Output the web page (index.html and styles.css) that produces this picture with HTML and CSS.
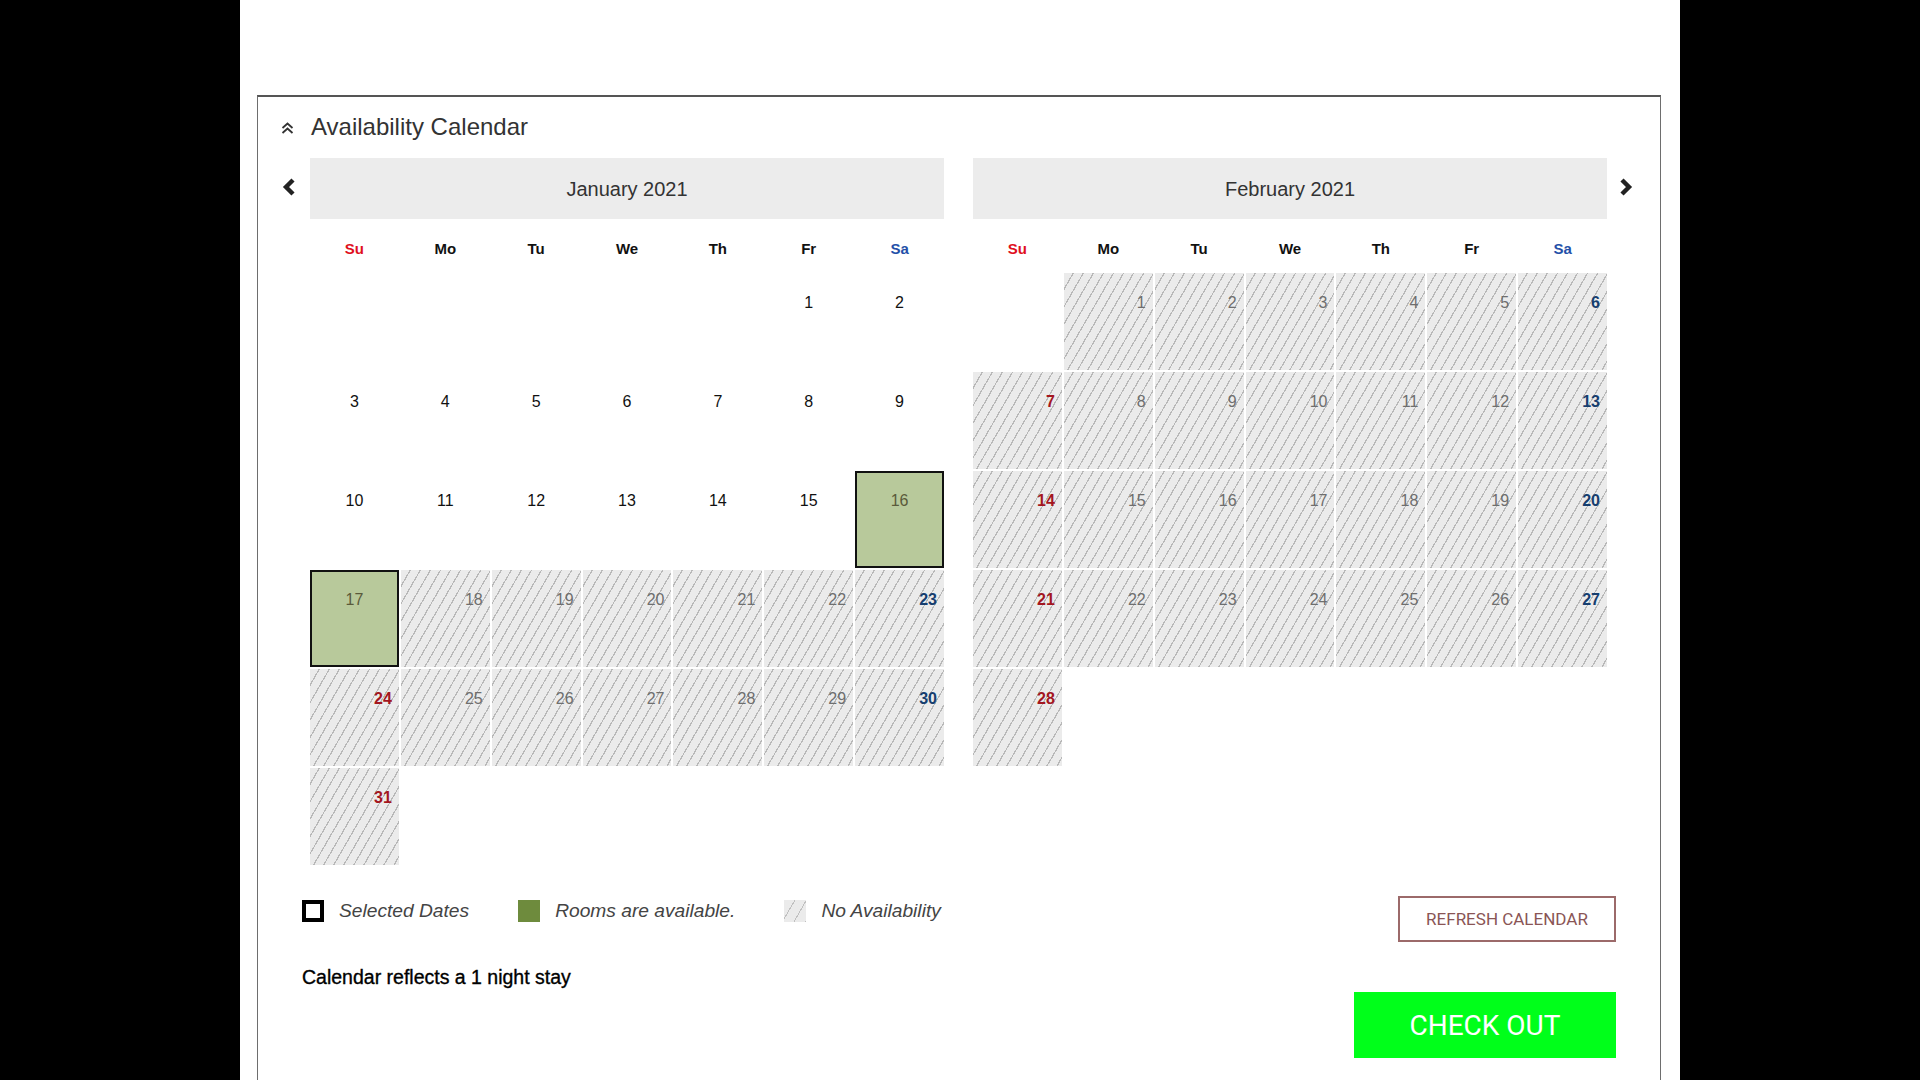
FILE: index.html
```html
<!DOCTYPE html>
<html>
<head>
<meta charset="utf-8">
<title>Availability Calendar</title>
<link rel="stylesheet" href="styles.css">
</head>
<body>
<div class="page">
  <div class="box">
    <div class="title-row">
      <svg class="collapse" width="15" height="14" viewBox="0 0 15 14"><polyline points="2.5,7 7.5,2.5 12.5,7" /><polyline points="2.5,12 7.5,7.5 12.5,12" /></svg>
      <span class="title">Availability Calendar</span>
    </div>
    <div class="cal-row">
      <div class="nav prev"><svg width="14" height="20" viewBox="0 0 14 20"><polyline points="11,3 4,10 11,17" /></svg></div>
      <div class="month">
        <div class="month-head">January 2021</div>
        <div class="dow"><span class="su">Su</span><span>Mo</span><span>Tu</span><span>We</span><span>Th</span><span>Fr</span><span class="sa">Sa</span></div>
        <div class="grid">
          <div class="c"></div><div class="c"></div><div class="c"></div><div class="c"></div><div class="c"></div><div class="c d">1</div><div class="c d">2</div>
          <div class="c d">3</div><div class="c d">4</div><div class="c d">5</div><div class="c d">6</div><div class="c d">7</div><div class="c d">8</div><div class="c d">9</div>
          <div class="c d">10</div><div class="c d">11</div><div class="c d">12</div><div class="c d">13</div><div class="c d">14</div><div class="c d">15</div><div class="c sel">16</div>
          <div class="c sel">17</div><div class="c x">18</div><div class="c x">19</div><div class="c x">20</div><div class="c x">21</div><div class="c x">22</div><div class="c x sat">23</div>
          <div class="c x sun">24</div><div class="c x">25</div><div class="c x">26</div><div class="c x">27</div><div class="c x">28</div><div class="c x">29</div><div class="c x sat">30</div>
          <div class="c x sun">31</div>
        </div>
      </div>
      <div class="month">
        <div class="month-head">February 2021</div>
        <div class="dow"><span class="su">Su</span><span>Mo</span><span>Tu</span><span>We</span><span>Th</span><span>Fr</span><span class="sa">Sa</span></div>
        <div class="grid">
          <div class="c"></div><div class="c x">1</div><div class="c x">2</div><div class="c x">3</div><div class="c x">4</div><div class="c x">5</div><div class="c x sat">6</div>
          <div class="c x sun">7</div><div class="c x">8</div><div class="c x">9</div><div class="c x">10</div><div class="c x">11</div><div class="c x">12</div><div class="c x sat">13</div>
          <div class="c x sun">14</div><div class="c x">15</div><div class="c x">16</div><div class="c x">17</div><div class="c x">18</div><div class="c x">19</div><div class="c x sat">20</div>
          <div class="c x sun">21</div><div class="c x">22</div><div class="c x">23</div><div class="c x">24</div><div class="c x">25</div><div class="c x">26</div><div class="c x sat">27</div>
          <div class="c x sun">28</div>
        </div>
      </div>
      <div class="nav next"><svg width="14" height="20" viewBox="0 0 14 20"><polyline points="3,3 10,10 3,17" /></svg></div>
    </div>
    <div class="footer">
      <div class="left">
        <div class="legend">
          <div class="item"><span class="sw sw-sel"></span><span class="lt">Selected Dates</span></div>
          <div class="item"><span class="sw sw-avail"></span><span class="lt">Rooms are available.</span></div>
          <div class="item"><span class="sw sw-none"></span><span class="lt">No Availability</span></div>
        </div>
        <div class="note">Calendar reflects a 1 night stay</div>
      </div>
      <div class="right">
        <button class="refresh">REFRESH CALENDAR</button>
        <button class="checkout">CHECK OUT</button>
      </div>
    </div>
  </div>
</div>
</body>
</html>
```
FILE: styles.css
```css
html, body {
  margin: 0;
  padding: 0;
  background: #000;
  height: 1080px;
  overflow: hidden;
}
.page {
  width: 1440px;
  height: 1080px;
  margin: 0 auto;
  background: #fff;
  padding-top: 95px;
  box-sizing: border-box;
  overflow: hidden;
  font-family: "Liberation Sans", Arial, sans-serif;
}
.box {
  margin-left: 17px;
  width: 1404px;
  height: 1100px;
  box-sizing: border-box;
  border: 1px solid #6e6e6e;
  border-top: 2px solid #555;
}
.title-row {
  display: flex;
  align-items: center;
  padding: 19px 0 0 22px;
  height: 22px;
  margin-bottom: 20px;
}
.collapse {
  fill: none;
  stroke: #333;
  stroke-width: 1.8;
  margin-right: 16px;
  margin-top: 2px;
}
.title {
  font-size: 24px;
  color: #333;
  line-height: 22px;
}
.cal-row {
  display: flex;
  padding-left: 22px;
}
.nav {
  width: 30px;
}
.nav svg {
  margin-top: 19px;
  fill: none;
  stroke: #222;
  stroke-width: 4.4;
  stroke-linejoin: miter;
}
.nav.prev svg { margin-left: 2px; }
.nav.next { width: 43px; }
.nav.next svg { margin-left: 12px; }
.month {
  width: 634px;
}
.month + .month {
  margin-left: 29px;
}
.month-head {
  height: 61px;
  line-height: 62px;
  background: #ececec;
  text-align: center;
  font-size: 20px;
  color: #333;
}
.dow {
  display: grid;
  grid-template-columns: repeat(7, 1fr);
  column-gap: 2px;
  height: 54px;
  box-sizing: border-box;
  padding-top: 20px;
  line-height: 20px;
  font-size: 15px;
  font-weight: bold;
  color: #111;
  text-align: center;
}
.dow .su { color: #e0101e; }
.dow .sa { color: #2450a8; }
.grid {
  display: grid;
  grid-template-columns: repeat(7, 1fr);
  grid-auto-rows: 97px;
  gap: 2px;
}
.c {
  box-sizing: border-box;
  padding-top: 21px;
  line-height: 18px;
  font-size: 16px;
  color: #111;
}
.d {
  text-align: center;
}
.sel {
  text-align: center;
  background: #b8c99b;
  border: 2px solid #111;
  padding-top: 19px;
  color: #5a5a3a;
}
.x {
  text-align: right;
  padding-right: 7px;
  color: #6e6e6e;
  background-color: #ebebeb;
  background-image: repeating-linear-gradient(120deg, transparent 0 7.5px, #b8b8b8 7.5px 8.7px);
}
.x.sun { color: #a3161f; font-weight: bold; }
.x.sat { color: #163e6f; font-weight: bold; }
.footer {
  display: flex;
  justify-content: space-between;
  padding: 0 44px;
}
.legend {
  display: flex;
  align-items: center;
  margin-top: 35px;
  height: 22px;
}
.item {
  display: flex;
  align-items: center;
  margin-right: 49px;
}
.sw {
  width: 22px;
  height: 22px;
  box-sizing: border-box;
  margin-right: 15px;
  flex: none;
}
.sw-sel { border: 4px solid #000; background: #fff; }
.sw-avail { background: #6e8b3d; }
.sw-none {
  background-color: #ebebeb;
  background-image: repeating-linear-gradient(120deg, transparent 0 9px, #c0c0c0 9px 10px);
}
.lt {
  font-style: italic;
  font-size: 19.2px;
  color: #444;
  line-height: 22px;
}
.note {
  margin-top: 44px;
  font-size: 19.5px;
  line-height: 22px;
  color: #000;
  -webkit-text-stroke: 0.35px #000;
}
.right {
  display: flex;
  flex-direction: column;
  align-items: flex-end;
}
.refresh {
  margin-top: 31px;
  width: 218px;
  height: 46px;
  background: #fff;
  border: 2px solid #9c6a6a;
  color: #8a5555;
  font-family: Roboto, "Liberation Sans", sans-serif;
  font-size: 17px;
  padding: 0;
}
.checkout {
  margin-top: 50px;
  width: 262px;
  height: 66px;
  background: #00ff1a;
  border: none;
  color: #fff;
  font-family: Roboto, "Liberation Sans", sans-serif;
  font-size: 28px;
  padding: 0;
}
```
